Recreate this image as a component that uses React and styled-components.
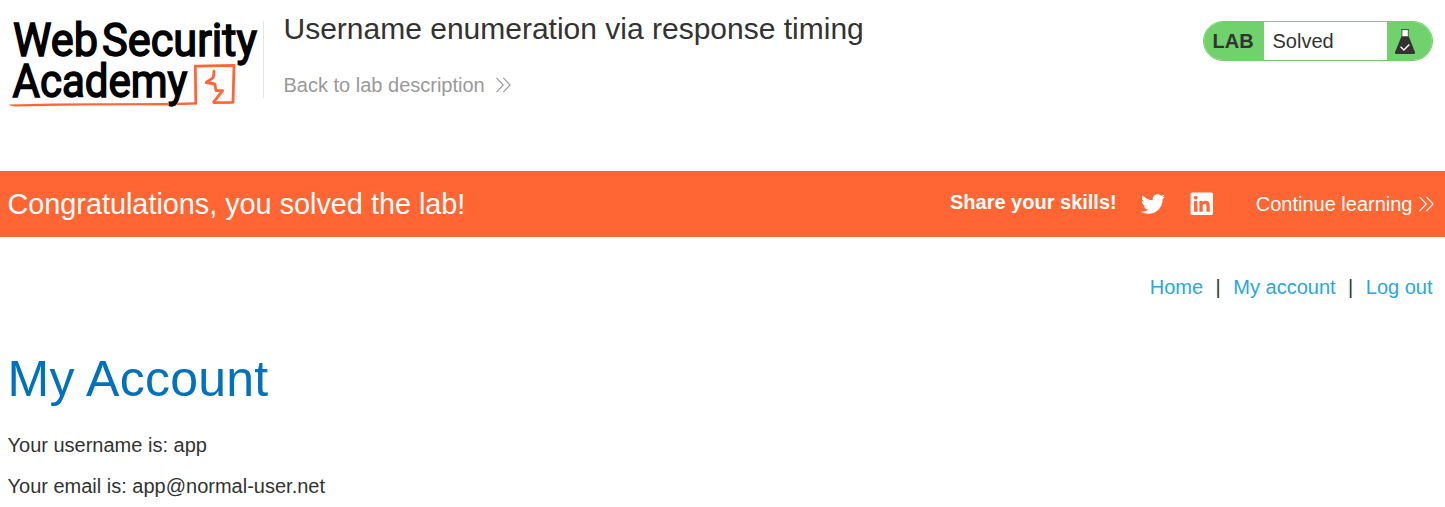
import React from "react";
import styled, { createGlobalStyle } from "styled-components";
import { FaTwitter, FaLinkedin } from "react-icons/fa";

const GlobalStyle = createGlobalStyle`
  body { margin: 0; background: #fff; }
  * { box-sizing: border-box; }
`;

const Page = styled.div`
  height: 507px;
  overflow: hidden;
  font: 20px/24px "Liberation Sans", Arial, sans-serif;
  color: #333332;
`;

const Header = styled.header`
  display: flex;
  height: 171px;
  padding: 0 12px 0 8px;
`;

const Logo = styled.svg`
  width: 255px;
  height: 120px;
  flex: none;
  overflow: visible;
`;

const TitleBlock = styled.div`
  flex: 1;
  height: 77px;
  margin-top: 21px;
  padding-left: 19.5px;
  border-left: 1px solid #e5e5e5;
`;

const Title = styled.h2`
  margin: -9px 0 0;
  font-size: 30px;
  line-height: 34px;
  font-weight: 400;
  white-space: nowrap;
`;

const BackLink = styled.a`
  display: flex;
  align-items: center;
  gap: 11px;
  margin-top: 27px;
  color: #999;
`;

const Status = styled.div`
  display: flex;
  width: 230px;
  height: 40px;
  margin-top: 21px;
  border: 1px solid #70d16d;
  border-radius: 20px;
  overflow: hidden;
  line-height: 38px;
`;

const StatusTag = styled.strong`
  width: 60px;
  padding-left: 8.5px;
  background: #70d16d;
`;

const StatusText = styled.span`
  flex: 1;
  padding-left: 8.5px;
`;

const StatusIcon = styled.span`
  width: 45px;
  padding: 7px 0 0 8px;
  background: #70d16d;
  line-height: 0;
`;

const Banner = styled.section`
  display: flex;
  align-items: center;
  height: 66px;
  padding: 0 11.5px 0 7.5px;
  background: #ff6633;
  color: #fff;
`;

const BannerTitle = styled.h4`
  flex: 1;
  margin: 0;
  font-size: 28.8px;
  font-weight: 400;
`;

const Share = styled.div`
  display: flex;
  align-items: center;
  margin-right: 41.5px;
`;

const ShareLabel = styled.strong`
  margin: -4px 24.5px 0 0;
`;

const ShareIcon = styled.a`
  display: flex;
  margin-left: ${(p) => p.$gap || 0}px;
`;

const Continue = styled.a`
  display: flex;
  align-items: center;
  gap: 6px;
`;

const Nav = styled.nav`
  display: flex;
  justify-content: flex-end;
  gap: 12.5px;
  margin-top: 38px;
  padding-right: 12.5px;
`;

const NavLink = styled.a`
  color: #29a7de;
`;

const Main = styled.main`
  padding: 0 7.5px;
`;

const Heading = styled.h1`
  margin: 50px 0 0;
  color: #0071bc;
  font-size: 50px;
  line-height: 60px;
  font-weight: 400;
  letter-spacing: 0.25px;
`;

const Line = styled.p`
  margin: ${(p) => p.$top}px 0 0;
`;

const Chevrons = () => (
  <svg width="15" height="16" viewBox="0 0 15 16" fill="none" stroke="currentColor" strokeWidth="1.1">
    <path d="M0.5 0.8 7.3 8 0.5 15.2M7.3 0.8 14.1 8 7.3 15.2" />
  </svg>
);

const Flask = () => (
  <svg width="20" height="26" viewBox="0 0 20 26">
    <path d="M6.8 1h6.6v7H6.8z" fill="#fff" />
    <path d="M6 .6h8M6.9 1v6.5M13.3 1v6.5" stroke="#333332" strokeWidth=".8" fill="none" />
    <path d="M6.5 7.3h7.2L20 23.3q.4 1.7-1.5 1.7h-17Q-.4 25 0 23.3Z" fill="#333332" />
    <path d="m5.6 17.8 3.3 3.2 5.4-5.5" fill="none" stroke="#fff" strokeWidth="1.4" />
  </svg>
);

const AcademyLogo = () => (
  <Logo viewBox="0 0 255 120" aria-label="Web Security Academy">
    <g fill="#000" stroke="#000" strokeWidth="1.5" fontFamily="Roboto, sans-serif" fontWeight="400" fontSize="45.5">
      <text x="5" y="55.8" textLength="85" lengthAdjust="spacingAndGlyphs">Web</text>
      <text x="94" y="55.8" textLength="155" lengthAdjust="spacingAndGlyphs">Security</text>
      <text x="4.5" y="97.4" textLength="175" lengthAdjust="spacingAndGlyphs">Academy</text>
    </g>
    <g fill="#ff6633">
      <path d="M1 104.5Q50 103 100 103.2L161 102.9 161 105.4Q90 104.9 8 106.6Q2 106 1 104.5Z" />
      <path d="M169 102.8 186.5 102.2 189.3 104.6 169 105.3Z" />
    </g>
    <g fill="none" stroke="#ff6633" strokeWidth="2.8" strokeLinejoin="round" strokeLinecap="round">
      <path d="M187.8 103 187.3 66.2 226 65.4 225 102.3 206 102.6" />
      <path d="M206 71.2 205.2 77.6 198.2 82.5 206.8 84 208 90.6 214.6 90.6 205.8 101.8" />
    </g>
  </Logo>
);

export default function App() {
  return (
    <Page>
      <GlobalStyle />
      <Header>
        <AcademyLogo />
        <TitleBlock>
          <Title>Username enumeration via response timing</Title>
          <BackLink>Back to lab description <Chevrons /></BackLink>
        </TitleBlock>
        <Status>
          <StatusTag>LAB</StatusTag>
          <StatusText>Solved</StatusText>
          <StatusIcon><Flask /></StatusIcon>
        </Status>
      </Header>
      <Banner>
        <BannerTitle>Congratulations, you solved the lab!</BannerTitle>
        <Share>
          <ShareLabel>Share your skills!</ShareLabel>
          <ShareIcon><FaTwitter size={24} /></ShareIcon>
          <ShareIcon $gap={23.5}><FaLinkedin size={25.5} /></ShareIcon>
        </Share>
        <Continue>Continue learning <Chevrons /></Continue>
      </Banner>
      <Nav>
        <NavLink>Home</NavLink>
        <span>|</span>
        <NavLink>My account</NavLink>
        <span>|</span>
        <NavLink>Log out</NavLink>
      </Nav>
      <Main>
        <Heading>My Account</Heading>
        <Line $top={24}>Your username is: app</Line>
        <Line $top={17}>Your email is: app@normal-user.net</Line>
      </Main>
    </Page>
  );
}
